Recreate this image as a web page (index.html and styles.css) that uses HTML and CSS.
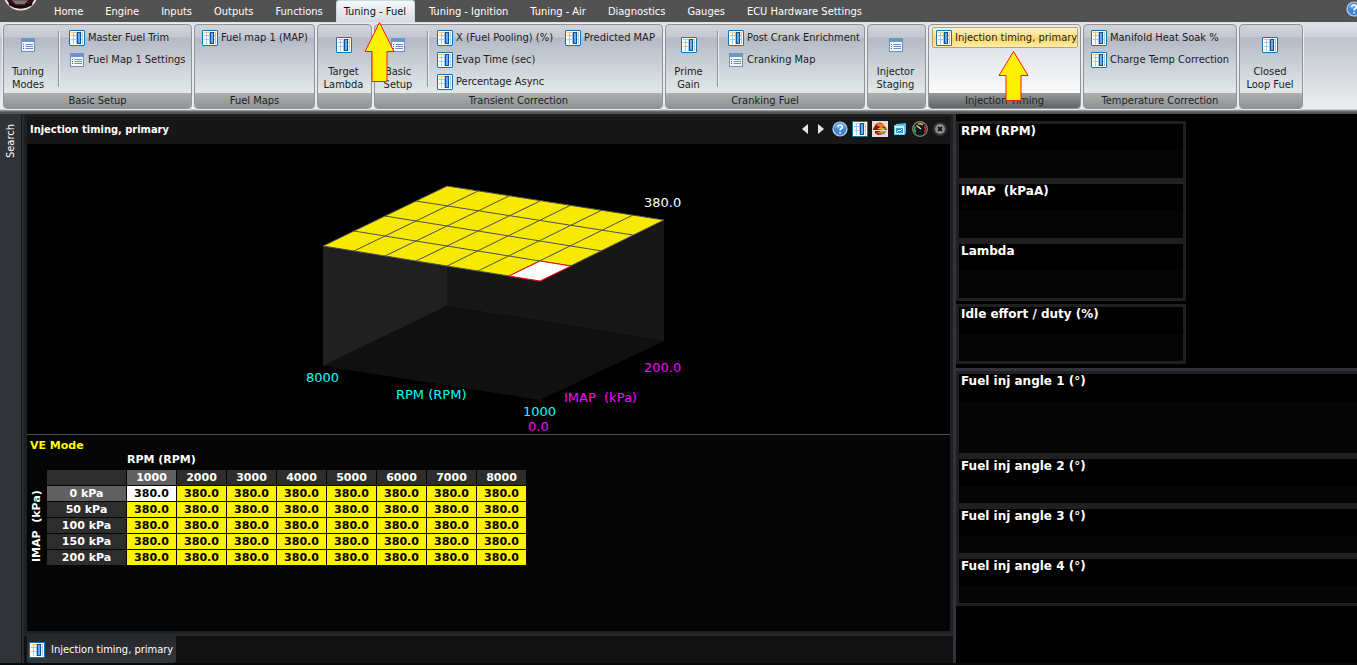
FILE: index.html
```html
<!DOCTYPE html>
<html lang="en">
<head>
<meta charset="utf-8">
<title>Injection timing, primary</title>
<link rel="stylesheet" href="styles.css">
</head>
<body>
<svg class="defs" aria-hidden="true">
  <symbol id="i-table" viewBox="0 0 16 16">
    <rect x=".5" y=".5" width="15" height="15" rx=".5" fill="#fff" stroke="#0f76b0"/>
    <path d="M2 5.500h12M2 9.500h12M4.500 3v11M7.500 3v11M13.500 3v11" stroke="#a3c8e6" fill="none"/>
    <path d="M2 2.500h12" stroke="#fcc65c"/>
    <rect x="8.500" y="2.500" width="3" height="11" fill="#6fabe8" stroke="#0b4f9c"/>
  </symbol>
  <symbol id="i-list" viewBox="0 0 16 16">
    <rect x="1.500" y="1.500" width="13" height="13" fill="#f4f8ff" stroke="#6d8fc9"/>
    <rect x="1" y="1" width="14" height="4" fill="#6f93cf"/>
    <path d="M5.500 7.500H13M5.500 9.500H13M5.500 11.500H13" stroke="#6d8fc9"/>
    <path d="M3 7.500h1M3 9.500h1M3 11.500h1" stroke="#3862ad"/>
  </symbol>
  <symbol id="i-help" viewBox="0 0 16 16">
    <circle cx="8" cy="8" r="7" fill="#3f86d6" stroke="#b9d7f5" stroke-width="1.200"/>
    <path d="M2.500 7a5.500 5.500 0 0 1 11 0q-5.500 2-11 0" fill="#5f9fe2"/>
    <path d="M5.800 6.200q.2-2.200 2.300-2.200t2.200 1.900q0 1.200-1.300 1.900-.9.500-.9 1.700M8.100 11v1.600" fill="none" stroke="#fff" stroke-width="1.600"/>
  </symbol>
</svg>

<header class="menu">
  <svg class="logo" viewBox="0 0 44 22" aria-hidden="true">
    <circle cx="21" cy="-7" r="16.500" fill="#3a0b0f" stroke="#e6e6e6" stroke-width="2"/>
    <path d="M12 0h17l-4 4h-9z" fill="#777"/>
    <path d="M9 2q12 9 24 0v3q-12 7-24 0z" fill="#17090a"/>
  </svg>
  <nav class="tabs">
    <button class="tab">Home</button>
    <button class="tab">Engine</button>
    <button class="tab">Inputs</button>
    <button class="tab">Outputs</button>
    <button class="tab">Functions</button>
    <button class="tab active">Tuning - Fuel</button>
    <button class="tab">Tuning - Ignition</button>
    <button class="tab">Tuning - Air</button>
    <button class="tab">Diagnostics</button>
    <button class="tab">Gauges</button>
    <button class="tab">ECU Hardware Settings</button>
  </nav>
  <button class="help" aria-label="Help"><svg class="icon"><use href="#i-help"/></svg></button>
</header>

<section class="ribbon">
  <div class="group g-basic">
    <div class="body">
      <button class="big"><svg class="icon"><use href="#i-list"/></svg><span>Tuning<br>Modes</span></button>
      <i class="sep"></i>
      <div class="list">
        <button class="cmd"><svg class="icon"><use href="#i-table"/></svg>Master Fuel Trim</button>
        <button class="cmd"><svg class="icon"><use href="#i-list"/></svg>Fuel Map 1 Settings</button>
      </div>
    </div>
    <h2>Basic Setup</h2>
  </div>
  <div class="group g-maps">
    <div class="body">
      <div class="list">
        <button class="cmd"><svg class="icon"><use href="#i-table"/></svg>Fuel map 1 (MAP)</button>
      </div>
    </div>
    <h2>Fuel Maps</h2>
  </div>
  <div class="group g-lambda">
    <div class="body">
      <button class="big"><svg class="icon"><use href="#i-table"/></svg><span>Target<br>Lambda</span></button>
    </div>
    <h2></h2>
  </div>
  <div class="group g-transient">
    <div class="body">
      <button class="big"><svg class="icon"><use href="#i-list"/></svg><span>Basic<br>Setup</span></button>
      <i class="sep"></i>
      <div class="list">
        <button class="cmd"><svg class="icon"><use href="#i-table"/></svg>X (Fuel Pooling) (%)</button>
        <button class="cmd"><svg class="icon"><use href="#i-table"/></svg>Evap Time (sec)</button>
        <button class="cmd"><svg class="icon"><use href="#i-table"/></svg>Percentage Async</button>
      </div>
      <div class="list">
        <button class="cmd"><svg class="icon"><use href="#i-table"/></svg>Predicted MAP</button>
      </div>
    </div>
    <h2>Transient Correction</h2>
  </div>
  <div class="group g-crank">
    <div class="body">
      <button class="big"><svg class="icon"><use href="#i-table"/></svg><span>Prime<br>Gain</span></button>
      <i class="sep"></i>
      <div class="list">
        <button class="cmd"><svg class="icon"><use href="#i-table"/></svg>Post Crank Enrichment</button>
        <button class="cmd"><svg class="icon"><use href="#i-list"/></svg>Cranking Map</button>
      </div>
    </div>
    <h2>Cranking Fuel</h2>
  </div>
  <div class="group g-staging">
    <div class="body">
      <button class="big"><svg class="icon"><use href="#i-list"/></svg><span>Injector<br>Staging</span></button>
    </div>
    <h2></h2>
  </div>
  <div class="group g-timing hot">
    <div class="body">
      <div class="list">
        <button class="cmd selected"><svg class="icon"><use href="#i-table"/></svg>Injection timing, primary</button>
      </div>
    </div>
    <h2>Injection Timing</h2>
  </div>
  <div class="group g-temp">
    <div class="body">
      <div class="list">
        <button class="cmd"><svg class="icon"><use href="#i-table"/></svg>Manifold Heat Soak %</button>
        <button class="cmd"><svg class="icon"><use href="#i-table"/></svg>Charge Temp Correction</button>
      </div>
    </div>
    <h2>Temperature Correction</h2>
  </div>
  <div class="group g-loop">
    <div class="body">
      <button class="big"><svg class="icon"><use href="#i-table"/></svg><span>Closed<br>Loop Fuel</span></button>
    </div>
    <h2></h2>
  </div>
</section>

<svg class="arrow arrow-tab" viewBox="0 0 32 62" aria-hidden="true"><path d="M15.500 1.500L30 30.500H23V60.500H8V30.500H1z"/></svg>
<svg class="arrow arrow-cmd" viewBox="0 0 32 52" aria-hidden="true"><path d="M15.500 1.500L30 25.500H23V50.500H8V25.500H1z"/></svg>

<main class="work">
  <aside class="side"><button class="search">Search</button></aside>

  <div class="center">
    <section class="pane">
      <header class="pane-head">
        <h1>Injection timing, primary</h1>
        <div class="tools">
          <button aria-label="Previous"><svg class="icon" viewBox="0 0 16 16"><path d="M12 3v10L6 8z" fill="#e4e4e4"/></svg></button>
          <button aria-label="Next"><svg class="icon" viewBox="0 0 16 16"><path d="M6 3v10l6-5z" fill="#e4e4e4"/></svg></button>
          <button aria-label="Help"><svg class="icon"><use href="#i-help"/></svg></button>
          <button aria-label="Table view"><svg class="icon"><use href="#i-table"/></svg></button>
          <button aria-label="Surface view"><svg class="icon" viewBox="0 0 16 16"><rect width="16" height="16" fill="#e2dedb"/><path d="M1 8L4 3q4-3 7 0l3 4 1 2H1z" fill="#8c1508"/><path d="M4 4l3-2 4 1 2 3-5 0z" fill="#ef7a1d"/><path d="M5 8l4-2 5 2-2 1z" fill="#f4b234"/><path d="M3 10h11l-2 3-6 1-3-2z" fill="#6b1508"/><path d="M4 12l5-2 5 0-3 3z" fill="#e98c22"/></svg></button>
          <button aria-label="Layers"><svg class="icon" viewBox="0 0 16 16"><path d="M4 3l10-1v10l-2 2H4z" fill="#49b8e8"/><rect x="2.500" y="4.500" width="10" height="9" fill="#c9effc" stroke="#6bcaf0"/><rect x="4" y="7" width="7" height="5" fill="#2e9bd0"/><path d="M5 11l2-2 1 1 2-2" stroke="#fff" fill="none"/></svg></button>
          <button aria-label="Gauge"><svg class="icon" viewBox="0 0 16 16"><circle cx="8" cy="8" r="7.300" fill="#151515" stroke="#8d8d8d" stroke-width="1.200"/><path d="M3.800 11.500A5.300 5.300 0 0 1 3.300 5.500" fill="none" stroke="#2db046" stroke-width="1.500"/><path d="M6 3.100a5.300 5.300 0 0 1 5 .6" fill="none" stroke="#e3d32b" stroke-width="1.500"/><path d="M12.300 5a5.300 5.300 0 0 1 0 6.200" fill="none" stroke="#d22" stroke-width="1.500"/><path d="M4.500 4.500L9 8" stroke="#ddd" stroke-width="1.400"/></svg></button>
          <button aria-label="Close"><svg class="icon" viewBox="0 0 16 16"><circle cx="8" cy="8" r="7" fill="#333"/><circle cx="8" cy="8" r="5" fill="#8e8e8e"/><path d="M6 6l4 4M10 6l-4 4" stroke="#161616" stroke-width="1.800"/></svg></button>
        </div>
      </header>
      <svg class="surface" viewBox="0 0 923 290" role="img" aria-label="Injection timing surface">
        <path d="M296 102L420 42V162L296 222z" fill="#202020"/>
        <path d="M420 42L637 76V197L420 162z" fill="#171717"/>
        <path d="M296 222L420 162L637 197L513 256z" fill="#101010"/>
        <path d="M296 102L420 42L637 76L513 137z" fill="#f7e900" stroke="#505050"/>
        <path d="M451 47L327 107M482 52L358 112M513 57L389 117M544 61L420 122M575 66L451 127M606 71L482 132M327 87L544 122M358 72L575 107M389 57L606 91" stroke="#505050" fill="none"/>
        <path d="M513 137L482 132L513 117L544 122z" fill="#fff" stroke="#f00000"/>
        <g class="labels">
          <text class="white" x="617" y="63">380.0</text>
          <text class="pink" x="617" y="228">200.0</text>
          <text class="aqua" x="279" y="238">8000</text>
          <text class="aqua" x="369" y="255">RPM (RPM)</text>
          <text class="pink" x="537" y="258" xml:space="preserve">IMAP  (kPa)</text>
          <text class="aqua" x="496" y="272">1000</text>
          <text class="pink" x="501" y="287">0.0</text>
        </g>
      </svg>
      <section class="grid-area">
        <p class="mode">VE Mode</p>
        <p class="axis-x">RPM (RPM)</p>
        <div class="grid-row">
          <span class="axis-y">IMAP&nbsp; (kPa)</span>
          <table>
            <thead><tr><td class="corner"></td><th class="cur">1000</th><th>2000</th><th>3000</th><th>4000</th><th>5000</th><th>6000</th><th>7000</th><th>8000</th></tr></thead>
            <tbody>
              <tr><th class="cur">0 kPa</th><td class="sel">380.0</td><td>380.0</td><td>380.0</td><td>380.0</td><td>380.0</td><td>380.0</td><td>380.0</td><td>380.0</td></tr>
              <tr><th>50 kPa</th><td>380.0</td><td>380.0</td><td>380.0</td><td>380.0</td><td>380.0</td><td>380.0</td><td>380.0</td><td>380.0</td></tr>
              <tr><th>100 kPa</th><td>380.0</td><td>380.0</td><td>380.0</td><td>380.0</td><td>380.0</td><td>380.0</td><td>380.0</td><td>380.0</td></tr>
              <tr><th>150 kPa</th><td>380.0</td><td>380.0</td><td>380.0</td><td>380.0</td><td>380.0</td><td>380.0</td><td>380.0</td><td>380.0</td></tr>
              <tr><th>200 kPa</th><td>380.0</td><td>380.0</td><td>380.0</td><td>380.0</td><td>380.0</td><td>380.0</td><td>380.0</td><td>380.0</td></tr>
            </tbody>
          </table>
        </div>
      </section>
    </section>
    <footer class="docs">
      <button class="doc"><svg class="icon"><use href="#i-table"/></svg>Injection timing, primary</button>
    </footer>
  </div>

  <aside class="gauges">
    <div class="values">
      <div class="gauge">RPM (RPM)</div>
      <div class="gauge">IMAP&nbsp; (kPaA)</div>
      <div class="gauge">Lambda</div>
      <div class="gauge apart">Idle effort / duty (%)</div>
    </div>
    <div class="angles">
      <div class="gauge tall">Fuel inj angle 1 (°)</div>
      <div class="gauge">Fuel inj angle 2 (°)</div>
      <div class="gauge">Fuel inj angle 3 (°)</div>
      <div class="gauge">Fuel inj angle 4 (°)</div>
    </div>
  </aside>
</main>
</body>
</html>
```

FILE: styles.css
```css
* { box-sizing: border-box; }

body {
  margin: 0;
  min-height: 100vh;
  display: flex;
  flex-direction: column;
  position: relative;
  overflow: hidden;
  background: #000;
  color: #fff;
  font: 11px/13px "DejaVu Sans Condensed", "DejaVu Sans", sans-serif;
}

button {
  margin: 0;
  padding: 0;
  border: 0;
  background: none;
  color: inherit;
  font: inherit;
  white-space: nowrap;
}

h1, h2, p { margin: 0; font: inherit; }

.defs { position: absolute; width: 0; height: 0; }
.icon { display: block; width: 16px; height: 16px; flex: none; }

/* Menu */
.menu { display: flex; height: 22px; background: #525252; }
.logo { width: 43px; height: 22px; flex: none; }
.tabs { display: flex; flex: 1; }
.tab { padding: 0 8px; margin: 0 3px; height: 22px; }
.tab.active {
  margin-left: 2px;
  padding: 0 8px 0 7px;
  color: #111;
  background: linear-gradient(#f7f8fa, #d7dae1);
  border: 1px solid #c3dce4;
  border-bottom: 0;
  border-radius: 3px 3px 0 0;
}
.help { align-self: flex-start; width: 11px; padding-top: 1px; overflow: hidden; }

/* Ribbon */
.ribbon {
  display: flex;
  gap: 2px;
  height: 92px;
  padding: 2px 3px 0;
  color: #1c1c24;
  background: linear-gradient(#dfe2e8 0, #ced1d9 15px, #bfc3cd 16px, #e4e9ea 78px, #eef0f1 87px, #a9a9a9 88px, #555 90px);
}
.group {
  display: flex;
  flex-direction: column;
  flex: none;
  height: 85px;
  border: 1px solid #909397;
  border-radius: 4px;
  overflow: hidden;
  background: linear-gradient(#d0d3da 0, #c4c8d0 12px, #b4b9c5 13px, #e2e9e9 68px);
  box-shadow: 0 0 0 1px #e9ebee;
}
.group.hot { background: linear-gradient(#e9ebee 0, #dfe1e7 12px, #e5e7ec 30px, #fafafa 68px); }
.group h2 {
  height: 15px;
  line-height: 16px;
  text-align: center;
  background: linear-gradient(#aeb0b0, #8f9292);
}
.group.hot h2 { background: linear-gradient(#999b9b, #606363); }
.g-basic { width: 189px; }
.g-maps { width: 121px; }
.g-lambda { width: 55px; }
.g-transient { width: 289px; }
.g-crank { width: 200px; }
.g-staging { width: 59px; }
.g-timing { width: 153px; }
.g-temp { width: 154px; }
.g-loop { width: 64px; }

.body { display: flex; flex: 1; padding-top: 2px; }
.big {
  display: flex;
  flex-direction: column;
  align-items: center;
  gap: 12px;
  width: 48px;
  padding-top: 10px;
}
.big:only-child { width: 100%; padding-right: 2px; }
.g-transient .big { width: 46px; }
.sep { width: 2px; height: 56px; margin: 4px 2px 0 6px; border-left: 1px solid #8f949c; border-right: 1px solid #eceef1; }
.g-transient .sep { margin-right: 1px; }
.list { display: flex; flex-direction: column; align-items: flex-start; padding-left: 3px; gap: 1px; }
.list + .list { padding-left: 4px; }
.cmd { display: flex; align-items: center; gap: 3px; height: 21px; padding: 0 4px; }
.cmd.selected {
  padding: 0 0 0 3px;
  border: 1px solid #c4a55c;
  border-radius: 2px;
  background: linear-gradient(#fff2c8, #ffe08a 45%, #ffd561 55%, #ffeeb0);
}

/* Callout arrows laid over the ribbon */
.arrow { position: absolute; width: 32px; fill: #fff200; stroke: #ed1c24; }
.arrow-tab { left: 364px; top: 21px; height: 62px; }
.arrow-cmd { left: 998px; top: 50px; height: 52px; }

/* Work area */
.work { display: flex; flex: 1; border-bottom: 2px solid #080808; }
.side { width: 22px; border-right: 1px solid #15171a; background: #303338; }
.search { writing-mode: vertical-rl; transform: rotate(180deg); width: 21px; height: 54px; padding: 6px 0; line-height: 13px; }
.center { display: flex; flex-direction: column; flex: 1; min-width: 0; border-left: 2px solid #2b2d31; background: #111; }
.pane { display: flex; flex-direction: column; flex: 1; border: 3px solid #202020; background: #000; }
.pane-head { display: flex; align-items: center; justify-content: space-between; height: 27px; padding: 0 2px 3px 3px; background: #161616; }
.pane-head h1 { font-weight: bold; }
.tools { display: flex; gap: 4px; }
.tools button:first-child { margin-right: -4px; }
.surface { display: block; width: 100%; height: 291px; border-bottom: 1px solid #505055; }
.labels { font: 13px "DejaVu Sans", sans-serif; }
.white { fill: #fff; }
.pink { fill: #f0f; }
.aqua { fill: #0ff; }

.grid-area { flex: 1; padding: 4px 3px; background: #050505; font: bold 11px/14px "DejaVu Sans", sans-serif; }
.mode { color: #ff0; }
.axis-x { padding-left: 97px; }
.grid-row { display: flex; margin-top: 2px; }
.axis-y { writing-mode: vertical-rl; transform: rotate(180deg); width: 16px; height: 96px; line-height: 14px; padding-top: 3px; }
table { border-collapse: separate; border-spacing: 1px; table-layout: fixed; width: 481px; }
th, td { height: 15px; padding: 0; line-height: 15px; text-align: center; }
th { background: #2d2d2d; }
td { background: #fff200; color: #000; }
.corner { width: 79px; background: #2d2d2d; }
.cur { background: #606060; }
.sel { background: #fff; }

.docs { display: flex; height: 29px; border-top: 2px solid #24272b; }
.doc { display: flex; align-items: center; gap: 6px; margin-left: 3px; padding: 0 3px 0 2px; background: linear-gradient(#25272b, #33363b); border-radius: 0 0 3px 3px; }

/* Gauges */
.gauges { width: 404px; flex: none; border-left: 3px solid #303338; font: bold 12px/15px "DejaVu Sans", sans-serif; }
.values { padding: 7px 0 4px; border-bottom: 3px solid #303338; }
.values .gauge { width: 230px; height: 60px; }
.values .apart { margin-top: 3px; }
.gauge { height: 50px; padding: 0 2px; border: 3px solid #202020; background: linear-gradient(#000 27px, #050505 27px); }
.gauge.tall { height: 85px; }
.angles .gauge { border-right: 0; }
```
